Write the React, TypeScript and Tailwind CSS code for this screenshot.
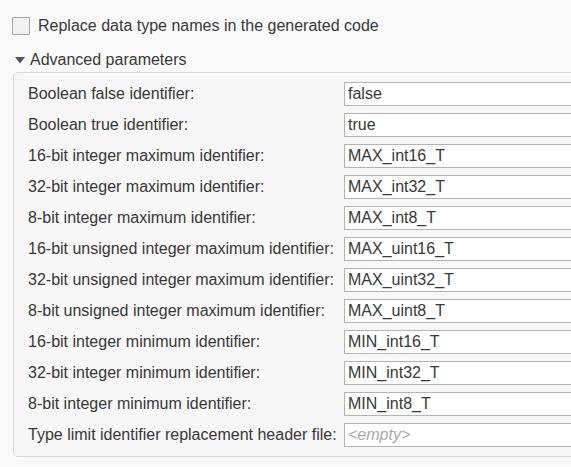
import React from 'react';

const rows: [string, string][] = [
  ['Boolean false identifier:', 'false'],
  ['Boolean true identifier:', 'true'],
  ['16-bit integer maximum identifier:', 'MAX_int16_T'],
  ['32-bit integer maximum identifier:', 'MAX_int32_T'],
  ['8-bit integer maximum identifier:', 'MAX_int8_T'],
  ['16-bit unsigned integer maximum identifier:', 'MAX_uint16_T'],
  ['32-bit unsigned integer maximum identifier:', 'MAX_uint32_T'],
  ['8-bit unsigned integer maximum identifier:', 'MAX_uint8_T'],
  ['16-bit integer minimum identifier:', 'MIN_int16_T'],
  ['32-bit integer minimum identifier:', 'MIN_int32_T'],
  ['8-bit integer minimum identifier:', 'MIN_int8_T'],
  ['Type limit identifier replacement header file:', ''],
];

export default function App() {
  return (
    <div
      className="w-[571px] h-[467px] overflow-hidden bg-[#f9f9f9] text-[#383838] text-[16px]"
      style={{ fontFamily: '"Liberation Sans", Arial, sans-serif' }}
    >
      <div className="flex items-center gap-2 pl-3 pt-4 h-[35px]">
        <div className="w-[18px] h-[18px] border border-[#a8a8a8] bg-[#f2f2f2] rounded-[1px]" />
        <span className="leading-none">Replace data type names in the generated code</span>
      </div>
      <div className="flex items-center pl-[15px] mt-[17px] h-[16px]">
        <svg width="10" height="7" viewBox="0 0 10 7" className="mr-[5px]">
          <polygon points="0,0 10,0 5,6.5" fill="#555" />
        </svg>
        <span className="leading-none">Advanced parameters</span>
      </div>
      <div className="ml-[13px] mt-[4px] w-[600px] border border-[#dcdcdc] rounded-[5px] bg-[#f7f7f7] pl-[14px] pt-[9px] pb-[9px] flex flex-col gap-[7px]">
        {rows.map(([label, value]) => (
          <div key={label} className="flex items-center h-[24px]">
            <div className="w-[316px] shrink-0 leading-none">{label}</div>
            <div className="w-[240px] h-[24px] border border-[#b4b4b4] bg-white flex items-center pl-[3px] leading-none">
              {value ? value : <span className="italic text-[#aaa]">&lt;empty&gt;</span>}
            </div>
          </div>
        ))}
      </div>
    </div>
  );
}
